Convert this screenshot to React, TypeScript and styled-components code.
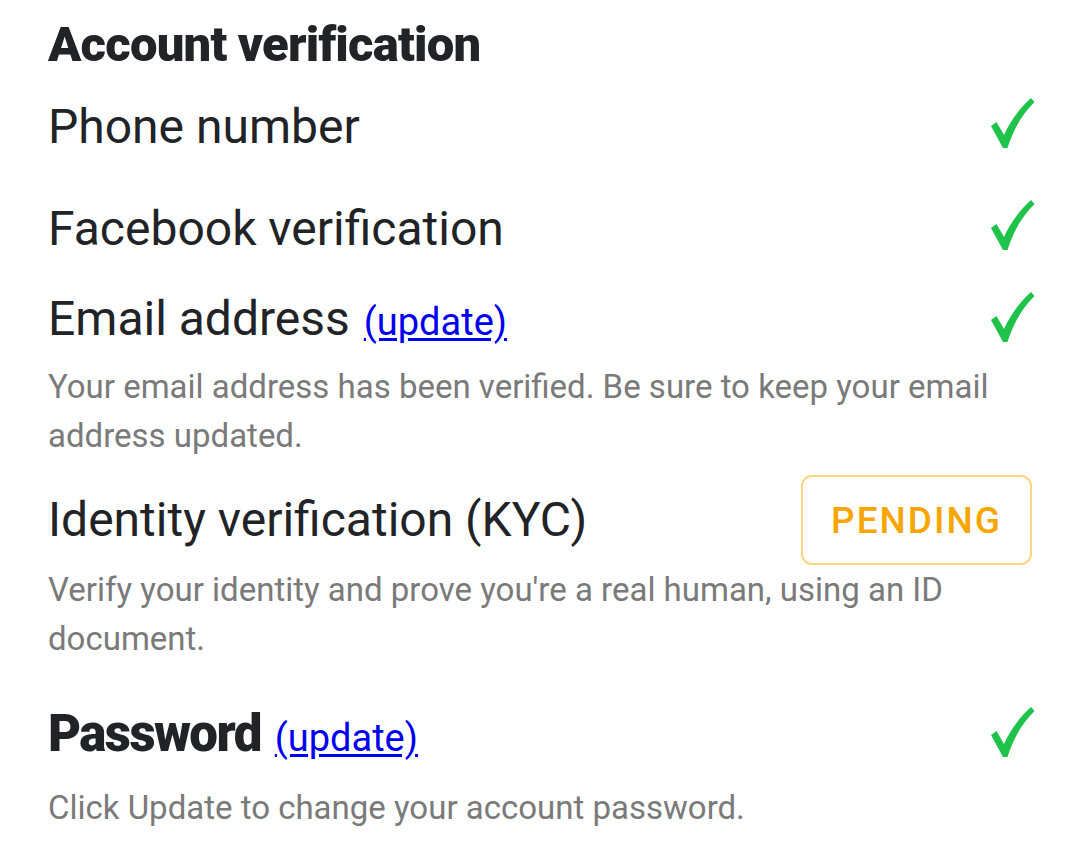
import styled, { createGlobalStyle } from "styled-components"

const GlobalStyle = createGlobalStyle`
  body {
    margin: 0;
    background: #fff;
    font-family: Roboto, "Noto Sans", sans-serif;
    color: #212327;
  }
`

const Page = styled.div`
  padding: 14px 47px 0 48px;
  display: flex;
  flex-direction: column;
`

const Heading = styled.h2`
  margin: 0;
  font-size: 49px;
  font-weight: 900;
  letter-spacing: -0.8px;
  line-height: 62px;
`

const Item = styled.div<{ $gap?: number }>`
  margin-top: ${({ $gap }) => $gap ?? 0}px;
`

const Row = styled.div`
  display: flex;
  align-items: center;
  justify-content: space-between;
  min-height: 62px;
`

const Label = styled.div<{ $bold?: boolean }>`
  font-size: ${({ $bold }) => ($bold ? "51px" : "48px")};
  font-weight: ${({ $bold }) => ($bold ? 900 : 400)};
  letter-spacing: ${({ $bold }) => ($bold ? "-1.6px" : "0")};
  line-height: 62px;
`

const UpdateLink = styled.a`
  font-size: 38px;
  font-weight: 400;
  letter-spacing: 0;
  color: #0000ee;
  text-decoration: underline;
  text-underline-offset: 3px;
  margin-left: 14px;
  cursor: pointer;
`

const Description = styled.p<{ $offset?: number }>`
  margin: ${({ $offset }) => $offset ?? 0}px 0 0;
  font-size: 33px;
  line-height: 49px;
  color: #7a7a7a;
  max-width: 980px;
`

const PendingBadge = styled.div`
  width: 231px;
  height: 90px;
  box-sizing: border-box;
  border: 2px solid #fdd67f;
  border-radius: 11px;
  display: flex;
  align-items: center;
  justify-content: center;
  color: #f7a600;
  font-size: 37px;
  font-weight: 500;
  letter-spacing: 2px;
`

const CheckIcon = styled.svg`
  flex-shrink: 0;
  margin: 0 -3px 8px 0;
`

function Check() {
  return (
    <CheckIcon width="46" height="52" viewBox="0 0 46 52">
      <path
        d="M2 29 L7.5 25 L15 38 C21 24 31 11 42 1 L45.5 5 C34 16 25 31 18.5 51 L14 51 Z"
        fill="#1fc24a"
      />
    </CheckIcon>
  )
}

export default function App() {
  return (
    <>
      <GlobalStyle />
      <Page>
        <Heading>Account verification</Heading>

        <Item $gap={20}>
          <Row>
            <Label>Phone number</Label>
            <Check />
          </Row>
        </Item>

        <Item $gap={40}>
          <Row>
            <Label>Facebook verification</Label>
            <Check />
          </Row>
        </Item>

        <Item $gap={28}>
          <Row>
            <Label>
              Email address<UpdateLink>(update)</UpdateLink>
            </Label>
            <Check />
          </Row>
          <Description $offset={9}>
            Your email address has been verified. Be sure to keep your email address updated.
          </Description>
        </Item>

        <Item $gap={15}>
          <Row>
            <Label>Identity verification (KYC)</Label>
            <PendingBadge>PENDING</PendingBadge>
          </Row>
          <Description>
            Verify your identity and prove you're a real human, using an ID document.
          </Description>
        </Item>

        <Item $gap={40}>
          <Row>
            <Label $bold>
              Password<UpdateLink>(update)</UpdateLink>
            </Label>
            <Check />
          </Row>
          <Description $offset={14}>Click Update to change your account password.</Description>
        </Item>
      </Page>
    </>
  )
}
